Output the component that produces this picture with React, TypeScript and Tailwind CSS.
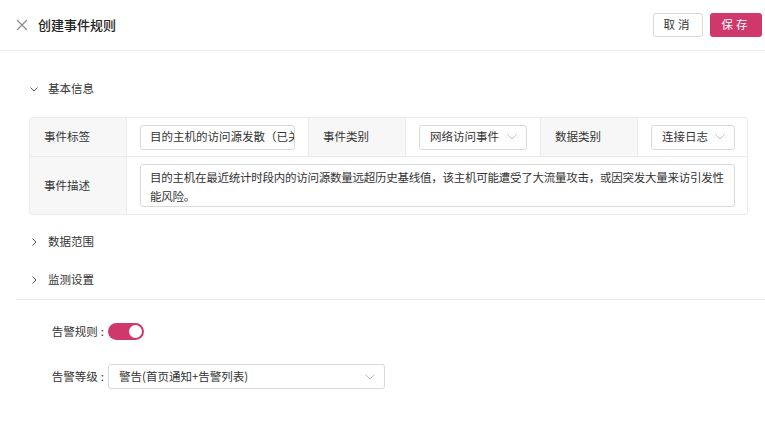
import React from "react"

const FONT = '"Noto Sans CJK SC", "Noto Sans", "Liberation Sans", sans-serif'

const Chevron = ({ dir }: { dir: "down" | "right" }) => (
  <svg width="10" height="10" viewBox="0 0 10 10" className="text-[#555]">
    {dir === "down" ? (
      <polyline points="1.5,3.5 5,7 8.5,3.5" fill="none" stroke="currentColor" strokeWidth="1" />
    ) : (
      <polyline points="3.5,1.5 7,5 3.5,8.5" fill="none" stroke="currentColor" strokeWidth="1" />
    )}
  </svg>
)

const SelectArrow = () => (
  <svg width="10" height="6" viewBox="0 0 10 6" className="shrink-0 text-[#bfbfbf]">
    <polyline points="0.5,0.5 5,5 9.5,0.5" fill="none" stroke="currentColor" strokeWidth="1" />
  </svg>
)

const Select = ({ value, className }: { value: string; className?: string }) => (
  <div
    className={`flex h-[25px] items-center justify-between rounded-[3px] border border-[#d9d9d9] bg-white pl-[10px] pr-[9px] text-[#333] ${className ?? ""}`}
  >
    <span className="truncate">{value}</span>
    <SelectArrow />
  </div>
)

const SectionHeader = ({ title, open }: { title: string; open?: boolean }) => (
  <div className="flex h-[38px] items-center gap-[9px] pl-[13px] text-[#333]">
    <Chevron dir={open ? "down" : "right"} />
    <span>{title}</span>
  </div>
)

const Label = ({ children }: { children: React.ReactNode }) => (
  <div className="flex items-center bg-[#f7f7f7] px-[14px] text-[#333]">{children}</div>
)

export default function App() {
  return (
    <div className="h-[423px] w-[765px] bg-white text-[11.5px]" style={{ fontFamily: FONT }}>
      {/* header */}
      <header className="flex h-[51px] items-center justify-between border-b border-[#eeeeee] pl-[16px] pr-[3px]">
        <div className="flex items-center gap-[10px]">
          <svg width="12" height="12" viewBox="0 0 12 12" className="text-[#8c8c8c]">
            <path d="M1 1L11 11M11 1L1 11" stroke="currentColor" strokeWidth="1.2" />
          </svg>
          <span className="text-[13px] font-medium text-[#222]">创建事件规则</span>
        </div>
        <div className="flex items-center gap-[7px] pb-[1px]">
          <button className="h-[24px] w-[50px] rounded-[3px] border border-[#d9d9d9] bg-white tracking-[3px] text-[#333]">
            取消
          </button>
          <button className="h-[24px] w-[52px] rounded-[3px] bg-[#d0386b] tracking-[3px] text-white">
            保存
          </button>
        </div>
      </header>

      <div className="pl-[16px] pt-[19px]">
        <SectionHeader title="基本信息" open />
        <div className="mr-[17px] mt-[9px] ml-[13px] overflow-hidden rounded-[3px] border border-[#ebebeb]">
          <div className="grid h-[39px] grid-cols-[96px_183px_96px_136px_96px_1fr] border-b border-[#ebebeb]">
            <Label>事件标签</Label>
            <div className="flex items-center border-x border-[#ebebeb] px-[13px]">
              <div className="flex h-[25px] w-full items-center overflow-hidden whitespace-nowrap rounded-[3px] border border-[#d9d9d9] px-[9px] text-[#333]">
                目的主机的访问源发散（已关联）
              </div>
            </div>
            <Label>事件类别</Label>
            <div className="flex items-center border-x border-[#ebebeb] px-[13px]">
              <Select value="网络访问事件" className="w-full" />
            </div>
            <Label>数据类别</Label>
            <div className="flex items-center border-l border-[#ebebeb] pl-[13px] pr-[12px]">
              <Select value="连接日志" className="w-full" />
            </div>
          </div>
          <div className="grid h-[57px] grid-cols-[96px_1fr]">
            <Label>事件描述</Label>
            <div className="flex items-center border-l border-[#ebebeb] pl-[13px] pr-[12px]">
              <div className="h-[43px] w-full rounded-[3px] border border-[#d9d9d9] pl-[9px] pr-[4px] pt-[3px] leading-[19px] tracking-[-0.25px] text-[#333]">
                目的主机在最近统计时段内的访问源数量远超历史基线值，该主机可能遭受了大流量攻击，或因突发大量来访引发性能风险。
              </div>
            </div>
          </div>
        </div>

        <div className="mt-[8px]">
          <SectionHeader title="数据范围" />
          <SectionHeader title="监测设置" />
        </div>

        <div className="border-t border-[#ebebeb] pt-[23px]">
          <div className="flex h-[17px] items-center">
            <div className="w-[92px] pr-[4px] text-right text-[#333]">
              告警规则<span className="ml-[3px]">:</span>
            </div>
            <div className="flex h-[17px] w-[36px] items-center justify-end rounded-full bg-[#d0386b] px-[2px]">
              <div className="h-[13px] w-[13px] rounded-full bg-white" />
            </div>
          </div>
          <div className="mt-[24px] flex h-[25px] items-center">
            <div className="w-[92px] pr-[4px] text-right text-[#333]">
              告警等级<span className="ml-[3px]">:</span>
            </div>
            <Select value="警告(首页通知+告警列表)" className="w-[277px]" />
          </div>
        </div>
      </div>
    </div>
  )
}
